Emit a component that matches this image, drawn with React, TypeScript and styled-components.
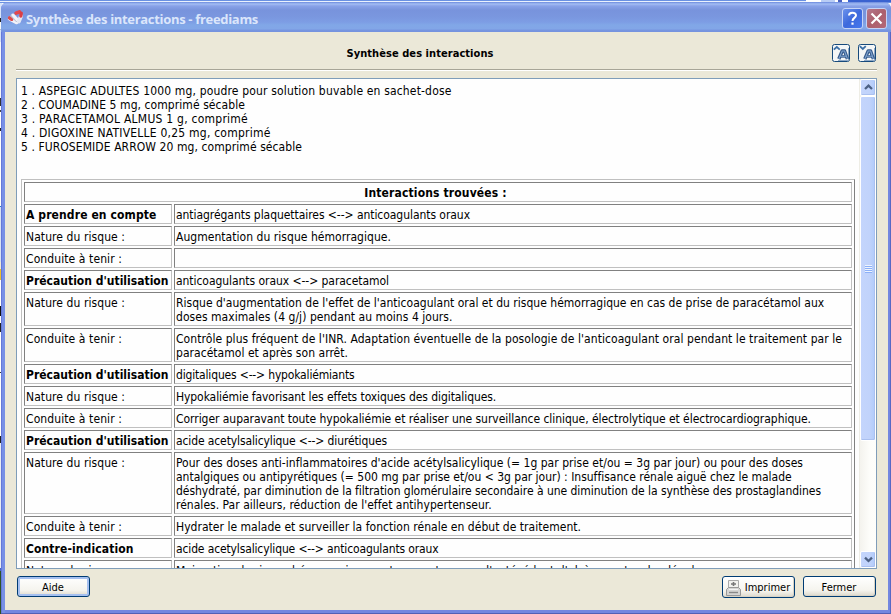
import React, { useLayoutEffect, useRef, useState } from "react";
import styled, { createGlobalStyle, css } from "styled-components";

const Global = createGlobalStyle`
  * { box-sizing: border-box; }
  html, body { margin: 0; padding: 0; overflow: hidden; }
  body { background: #f4f6fb; font: 12px/14px "DejaVu Sans Condensed", "DejaVu Sans", sans-serif; font-stretch: condensed; color: #000; }
`;

/* Desktop behind the dialog: slivers remain visible on the left and top edges */
const Desktop = styled.div`
  width: 891px;
  height: 614px;
  display: flex;
  flex-direction: column;
  background:
    linear-gradient(90deg, transparent 806px, #fff 806px 821px, #b9cdf5 821px 835px, #fff 835px 838px, #4a62c0 838px 842px, #fff 842px 848px, #3a62d0 848px) 0 0 / 891px 2px no-repeat,
    linear-gradient(#6a91e2 0 1px, #eaf1fd 1px 2px, #6a91e2 2px 3px) 0 0 / 891px 3px no-repeat,
    linear-gradient(#d8e4fa 0 18px, #222 18px 22px, #f6f8fc 22px 29px, #b8c0cc 29px 30px, #d4e0f8 30px 42px, #f5f6fa 42px 98px, #333 98px 106px,
      #fff 106px 110px, #444 110px 112px, #fff 112px 128px, #222 128px 131px, #fff 131px 206px, #2878c8 206px 207px, #d8e2f4 207px 262px, #f0ead8 262px 269px,
      #ecc030 269px 280px, #fff 280px 306px, #111 306px 316px, #fff 316px 323px, #222 323px 332px, #fff 332px 372px, #333 372px 373px, #fff 373px 436px, #222 436px 443px,
      #e8ecf4 443px 568px, #4868c8 568px 571px, #2e5226 571px 614px) 0 0 / 2px 614px no-repeat;
  padding: 2px 0 0 1px;
`;

const Window = styled.section`
  flex: 1;
  display: flex;
  flex-direction: column;
  border-radius: 7px 7px 0 0;
  background: linear-gradient(90deg, #6679d8 0 1px, #7890e6 1px 4px, transparent 4px 887px, #7387e0 887px 889px, #5868c4 889px), #7487e0;
  box-shadow: inset 0 -1px #5360b5;
  padding: 0 3px 4px 4px;
`;

const TitleBar = styled.header`
  height: 30px;
  margin: 0 -3px 0 -4px;
  padding: 2px 4px 0 6px;
  display: flex;
  align-items: center;
  gap: 3px;
  border-radius: 7px 7px 0 0;
  background: linear-gradient(#6a88dd 0, #a3bdf3 2px, #88a1e8 4px, #7893dc 8px, #7a97df 15px, #7d9de4 20px, #81a7e7 23px, #82a6e7 27px, #7796e0 28px, #7592df 30px);
`;

const WindowTitle = styled.h1`
  margin: 2px 0 0 -1px;
  flex: 1;
  color: #dbe6fb;
`;

const CaptionButton = styled.button<{ $tone: "blue" | "red" }>`
  width: 21px;
  height: 21px;
  padding: 0;
  display: grid;
  place-items: center;
  border: 1px solid #c5d3f6;
  border-radius: 3px;
  background: ${p => p.$tone === "blue"
    ? "linear-gradient(135deg, #6c92ec, #3d69dc 50%, #4678ee)"
    : "linear-gradient(135deg, #b4788c, #ac606d 50%, #b46878)"};
`;

const Client = styled.main`
  flex: 1;
  min-height: 0;
  display: flex;
  flex-direction: column;
  background: #ebe8d8;
  padding: 0 11px 12px;
`;

const Heading = styled.div`
  height: 37px;
  display: grid;
  grid-template-columns: 1fr auto 1fr;
  align-items: center;
  padding: 5px 0 0;
`;

const HeadingTitle = styled.h2`
  grid-column: 2;
  margin: 2px 0 0 -53px;
`;

const ZoomTools = styled.div`
  display: flex;
  justify-content: flex-end;
  gap: 8px;
  padding-right: 1px;
`;

const ZoomButton = styled.button`
  width: 18px;
  height: 18px;
  padding: 0;
  border: 0;
  background: none;

  svg { display: block; }
`;

const Rule = styled.hr`
  width: 100%;
  height: 2px;
  margin: 0;
  border: 0;
  background: linear-gradient(#a7a597 50%, #fff 50%);
`;

const Report = styled.div`
  height: 491px;
  margin-top: 7px;
  display: flex;
  border: 1px solid #7f9db9;
  background: #fefefe;
`;

const Page = styled.article`
  flex: 1;
  min-width: 0;
  overflow: hidden;
  padding: 5px 4px 0;
`;

const DrugList = styled.div`
  height: 95px;
`;

type Face = "body" | "strong" | "heading" | "caption";

const faces: Record<Face, ReturnType<typeof css>> = {
  body: css`font: 12px/14px "DejaVu Sans Condensed", "DejaVu Sans", sans-serif; font-stretch: condensed;`,
  strong: css`font: bold 12px/14px "DejaVu Sans Condensed", "DejaVu Sans", sans-serif; font-stretch: condensed;`,
  heading: css`font: bold 11px/14px "DejaVu Sans Condensed", "DejaVu Sans", sans-serif; font-stretch: condensed;`,
  caption: css`font: bold 13px/18px "Open Sans", "Noto Sans", sans-serif; font-stretch: normal;`,
};

const Text = styled.span<{ $face: Face }>`
  display: block;
  width: max-content;
  white-space: pre;
  ${p => faces[p.$face]}
`;

const Table = styled.div`
  width: 834px;
  display: grid;
  grid-template-columns: 148px 678px;
  gap: 2px;
  padding: 2px;
  border: 1px solid;
  border-color: #c0c0c0 #808080 #808080 #c0c0c0;
`;

const Cell = styled.div<{ $header?: boolean }>`
  min-height: 20px;
  padding: 3px 0 1px 1px;
  border: 1px solid;
  border-color: #808080 #c0c0c0 #c0c0c0 #808080;
  ${p => p.$header && css`
    grid-column: 1 / -1;
    display: flex;
    justify-content: center;
    padding-right: 6px;
  `}
`;

const ScrollBar = styled.div`
  width: 17px;
  display: flex;
  flex-direction: column;
  border-left: 1px solid #eeede5;
  background: linear-gradient(90deg, #f4f3ee, #fdfdfa 60%, #fefefb);
`;

const thumbFace = css`
  border: 1px solid #fff;
  border-radius: 2px;
  background: linear-gradient(90deg, #c4d5fc, #c1d3fb 60%, #b0cbfa);
  box-shadow: inset -1px -1px #aac0f0;
`;

const ScrollButton = styled.button`
  ${thumbFace}
  width: 16px;
  height: 17px;
  padding: 0;
  display: grid;
  place-items: center;
`;

const ScrollThumb = styled.div`
  ${thumbFace}
  height: 345px;
  display: grid;
  place-items: center;
`;

const Grip = styled.i`
  width: 7px;
  height: 8px;
  background: repeating-linear-gradient(#eef4fe 0 1px, #8cb0f8 1px 2px);
`;

const Spacer = styled.div`
  flex: 1;
`;

const Footer = styled.footer`
  display: flex;
  gap: 8px;
  padding: 7px 1px 0;
`;

const PushButton = styled.button<{ $default?: boolean; $icon?: boolean }>`
  width: 73px;
  height: ${p => (p.$icon ? 22 : 21)}px;
  padding: ${p => (p.$icon ? 1 : 2)}px 1px 0 0;
  display: flex;
  justify-content: center;
  align-items: center;
  gap: 4px;
  border: 1px solid #003c74;
  border-radius: 3px;
  background: linear-gradient(#fff, #f5f4ee 70%, #dcd8cb);
  box-shadow: ${p => (p.$default ? "inset 0 0 0 2px #a5c0f0" : "inset -1px -1px #d8d3c5")};
  color: #000;
  font: 11px/14px "DejaVu Sans Condensed", "DejaVu Sans", sans-serif;
  font-stretch: condensed;
`;

/** Single text line whose tracking is adjusted so that it spans `w` pixels. */
function Line({ t, w, face = "body" }: { t: string; w: number; face?: Face }) {
  const ref = useRef<HTMLSpanElement>(null);
  const [tracking, setTracking] = useState(0);
  useLayoutEffect(() => {
    const natural = ref.current!.getBoundingClientRect().width;
    setTracking(prev => prev + (w - natural) / t.length);
  }, [t, w]);
  return <Text ref={ref} $face={face} style={{ letterSpacing: `${tracking}px` }}>{t}</Text>;
}

const drugs: [string, number][] = [
  ["1 . ASPEGIC ADULTES 1000 mg, poudre pour solution buvable en sachet-dose", 430.5],
  ["2 . COUMADINE 5 mg, comprimé sécable", 224],
  ["3 . PARACETAMOL ALMUS 1 g, comprimé", 227],
  ["4 . DIGOXINE NATIVELLE 0,25 mg, comprimé", 249.5],
  ["5 . FUROSEMIDE ARROW 20 mg, comprimé sécable", 281],
];

type Row = { label: string; lw: number; bold?: boolean; lines: [string, number][] };
const nature = { label: "Nature du risque :", lw: 99 };
const conduite = { label: "Conduite à tenir :", lw: 96 };
const precaution = { label: "Précaution d'utilisation", lw: 142.5, bold: true };

const rows: Row[] = [
  { label: "A prendre en compte", lw: 130.5, bold: true, lines: [["antiagrégants plaquettaires <--> anticoagulants oraux", 294]] },
  { ...nature, lines: [["Augmentation du risque hémorragique.", 215]] },
  { ...conduite, lines: [] },
  { ...precaution, lines: [["anticoagulants oraux <--> paracetamol", 213]] },
  { ...nature, lines: [
    ["Risque d'augmentation de l'effet de l'anticoagulant oral et du risque hémorragique en cas de prise de paracétamol aux", 648],
    ["doses maximales (4 g/j) pendant au moins 4 jours.", 276.5],
  ] },
  { ...conduite, lines: [
    ["Contrôle plus fréquent de l'INR. Adaptation éventuelle de la posologie de l'anticoagulant oral pendant le traitement par le", 666],
    ["paracétamol et après son arrêt.", 172],
  ] },
  { ...precaution, lines: [["digitaliques <--> hypokaliémiants", 178.5]] },
  { ...nature, lines: [["Hypokaliémie favorisant les effets toxiques des digitaliques.", 320]] },
  { ...conduite, lines: [["Corriger auparavant toute hypokaliémie et réaliser une surveillance clinique, électrolytique et électrocardiographique.", 635]] },
  { ...precaution, lines: [["acide acetylsalicylique <--> diurétiques", 211]] },
  { ...nature, lines: [
    ["Pour des doses anti-inflammatoires d'acide acétylsalicylique (= 1g par prise et/ou = 3g par jour) ou pour des doses", 627],
    ["antalgiques ou antipyrétiques (= 500 mg par prise et/ou < 3g par jour) : Insuffisance rénale aiguë chez le malade", 615.5],
    ["déshydraté, par diminution de la filtration glomérulaire secondaire à une diminution de la synthèse des prostaglandines", 645],
    ["rénales. Par ailleurs, réduction de l'effet antihypertenseur.", 315.5],
  ] },
  { ...conduite, lines: [["Hydrater le malade et surveiller la fonction rénale en début de traitement.", 405]] },
  { label: "Contre-indication", lw: 107.5, bold: true, lines: [["acide acetylsalicylique <--> anticoagulants oraux", 262.5]] },
  { ...nature, lines: [["Majoration du risque hémorragique, notamment en cas d'antécédent d'ulcère gastro-duodénal.", 522]] },
];

const PillsIcon = () => (
  <svg width="17" height="18" viewBox="0 0 17 18">
    <g strokeLinecap="round" fill="none">
      <path d="M3 9.5L9.5 13" stroke="#f2f2f8" strokeWidth="4.4" />
      <path d="M2.6 9L4.6 10.2" stroke="#dd4a4a" strokeWidth="3.6" />
      <path d="M5.5 6.5L10 11" stroke="#b9bfd4" strokeWidth="4" />
      <path d="M6 6L10 10.5" stroke="#f4f4fa" strokeWidth="3" />
      <path d="M9 4.2L12.5 2.8" stroke="#e5484c" strokeWidth="3.4" />
      <path d="M14 7L11.8 12.5" stroke="#e4e8f4" strokeWidth="4" />
      <path d="M14.2 4.2L13.8 7" stroke="#d93f46" strokeWidth="3.4" />
    </g>
  </svg>
);

const FontSizeIcon = ({ up }: { up?: boolean }) => (
  <svg width="18" height="18" viewBox="0 0 18 18">
    <rect x=".5" y=".5" width="17" height="17" rx="2" fill="#f4f6f6" stroke="#174a7c" />
    <path d="M16.5 4v12.5H6" stroke="#8fa9c6" fill="none" />
    <path d={up ? "M1.8 5.6L4.8 3L7.8 5.6" : "M1.8 2.2L4.8 5L7.8 2.2"} fill="none" stroke="#3a6ea5" strokeWidth="1.8" />
    <path d="M6.8 15L10.2 7H12.6L15.4 15" fill="none" stroke="#35598a" strokeWidth="3.4" strokeLinejoin="round" />
    <path d="M8.6 12.4H14" stroke="#35598a" strokeWidth="2.6" />
    <path d="M6.8 15L10.2 7H12.6L15.4 15M8.6 12.2H14" fill="none" stroke="#7ea3cf" strokeWidth="1.1" />
  </svg>
);

const Chevron = ({ up }: { up?: boolean }) => (
  <svg width="9" height="7" viewBox="0 0 9 7">
    <path d={up ? "M1 5L4.5 1.7L8 5" : "M1 1.7L4.5 5L8 1.7"} fill="none" stroke="#4d6185" strokeWidth="2.3" />
  </svg>
);

const PrinterIcon = () => (
  <svg width="15" height="16" viewBox="0 0 15 16">
    <path d="M2.5 8.5V.5H12.5V8.5" fill="#f2f2ef" stroke="#aaa" />
    <path d="M7.5 2V6M5 4H10" fill="none" stroke="#777" strokeWidth="1.6" />
    <path d="M2.5 7.5H12.5L14.5 9.5V15.5H.5V9.5Z" fill="#d6d6d4" stroke="#999" />
    <path d="M3 9.5H12" stroke="#f4f4f4" />
    <path d="M3 12.5H12" stroke="#888" strokeWidth="1.4" />
  </svg>
);

export default function App() {
  return (
    <>
      <Global />
      <Desktop>
        <Window>
          <TitleBar>
            <PillsIcon />
            <WindowTitle><Line t="Synthèse des interactions - freediams" w={232} face="caption" /></WindowTitle>
            <CaptionButton $tone="blue" aria-label="Aide contextuelle">
              <svg width="13" height="15" viewBox="0 0 13 15">
                <path d="M3 4.5C3 .8 10 .8 10 4.3C10 7 6.5 6.8 6.5 10" fill="none" stroke="#fff" strokeWidth="2" />
                <path d="M5.4 11.5h2.2v2.2H5.4z" fill="#fff" />
              </svg>
            </CaptionButton>
            <CaptionButton $tone="red" aria-label="Fermer la fenêtre">
              <svg width="13" height="13" viewBox="0 0 13 13">
                <path d="M1.5 1.5L11.5 11.5M11.5 1.5L1.5 11.5" stroke="#fff" strokeWidth="2.2" />
              </svg>
            </CaptionButton>
          </TitleBar>
          <Client>
            <Heading>
              <HeadingTitle><Line t="Synthèse des interactions" w={147} face="heading" /></HeadingTitle>
              <ZoomTools>
                <ZoomButton aria-label="Agrandir le texte"><FontSizeIcon up /></ZoomButton>
                <ZoomButton aria-label="Réduire le texte"><FontSizeIcon /></ZoomButton>
              </ZoomTools>
            </Heading>
            <Rule />
            <Report>
              <Page>
                <DrugList>{drugs.map(([t, w]) => <Line key={t} t={t} w={w} />)}</DrugList>
                <Table>
                  <Cell $header><Line t="Interactions trouvées :" w={142.5} face="strong" /></Cell>
                  {rows.map((r, i) => (
                    <React.Fragment key={i}>
                      <Cell><Line t={r.label} w={r.lw} face={r.bold ? "strong" : "body"} /></Cell>
                      <Cell>{r.lines.map(([t, w]) => <Line key={t} t={t} w={w} />)}</Cell>
                    </React.Fragment>
                  ))}
                </Table>
              </Page>
              <ScrollBar>
                <ScrollButton aria-label="Monter"><Chevron up /></ScrollButton>
                <ScrollThumb><Grip /></ScrollThumb>
                <Spacer />
                <ScrollButton aria-label="Descendre"><Chevron /></ScrollButton>
              </ScrollBar>
            </Report>
            <Footer>
              <PushButton $default>Aide</PushButton>
              <Spacer />
              <PushButton $icon><PrinterIcon />Imprimer</PushButton>
              <PushButton>Fermer</PushButton>
            </Footer>
          </Client>
        </Window>
      </Desktop>
    </>
  );
}
